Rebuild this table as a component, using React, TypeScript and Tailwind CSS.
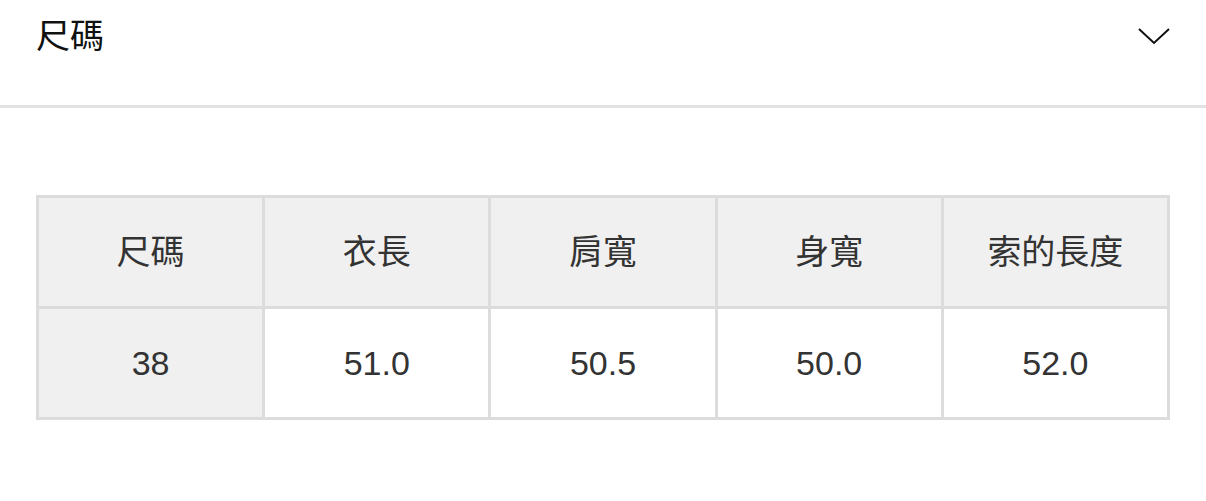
const headers = ['尺碼', '衣長', '肩寬', '身寬', '索的長度']
const values = ['38', '51.0', '50.5', '50.0', '52.0']

export default function App() {
  return (
    <div className="w-[1206px] h-[501px] bg-white font-['Liberation_Sans','Noto_Sans_CJK_TC',sans-serif] overflow-hidden">
      <div className="h-[72px] pl-[36px] pr-[36px] flex items-center justify-between">
        <span className="text-[34px] text-[#111]">尺碼</span>
        <svg width="32" height="18" viewBox="0 0 32 18" fill="none" className="mt-[-1px]">
          <path d="M1 2L16 16L31 2" stroke="#111" strokeWidth="2" />
        </svg>
      </div>
      <div className="mt-[33px] h-[3px] bg-[#e2e2e2]" />
      <div className="px-[36px] pt-[87px]">
        <table className="w-[1134px] border-collapse table-fixed text-[34px] text-[#333]">
          <tbody>
            <tr className="h-[111px] bg-[#f0f0f0]">
              {headers.map((h) => (
                <td key={h} className="border-[3px] border-[#dcdcdc] text-center align-middle">
                  {h}
                </td>
              ))}
            </tr>
            <tr className="h-[111px]">
              {values.map((v, i) => (
                <td
                  key={i}
                  className={
                    i === 0
                      ? 'border-[3px] border-[#dcdcdc] text-center align-middle bg-[#f0f0f0]'
                      : 'border-[3px] border-[#dcdcdc] text-center align-middle bg-white'
                  }
                >
                  {v}
                </td>
              ))}
            </tr>
          </tbody>
        </table>
      </div>
    </div>
  )
}
